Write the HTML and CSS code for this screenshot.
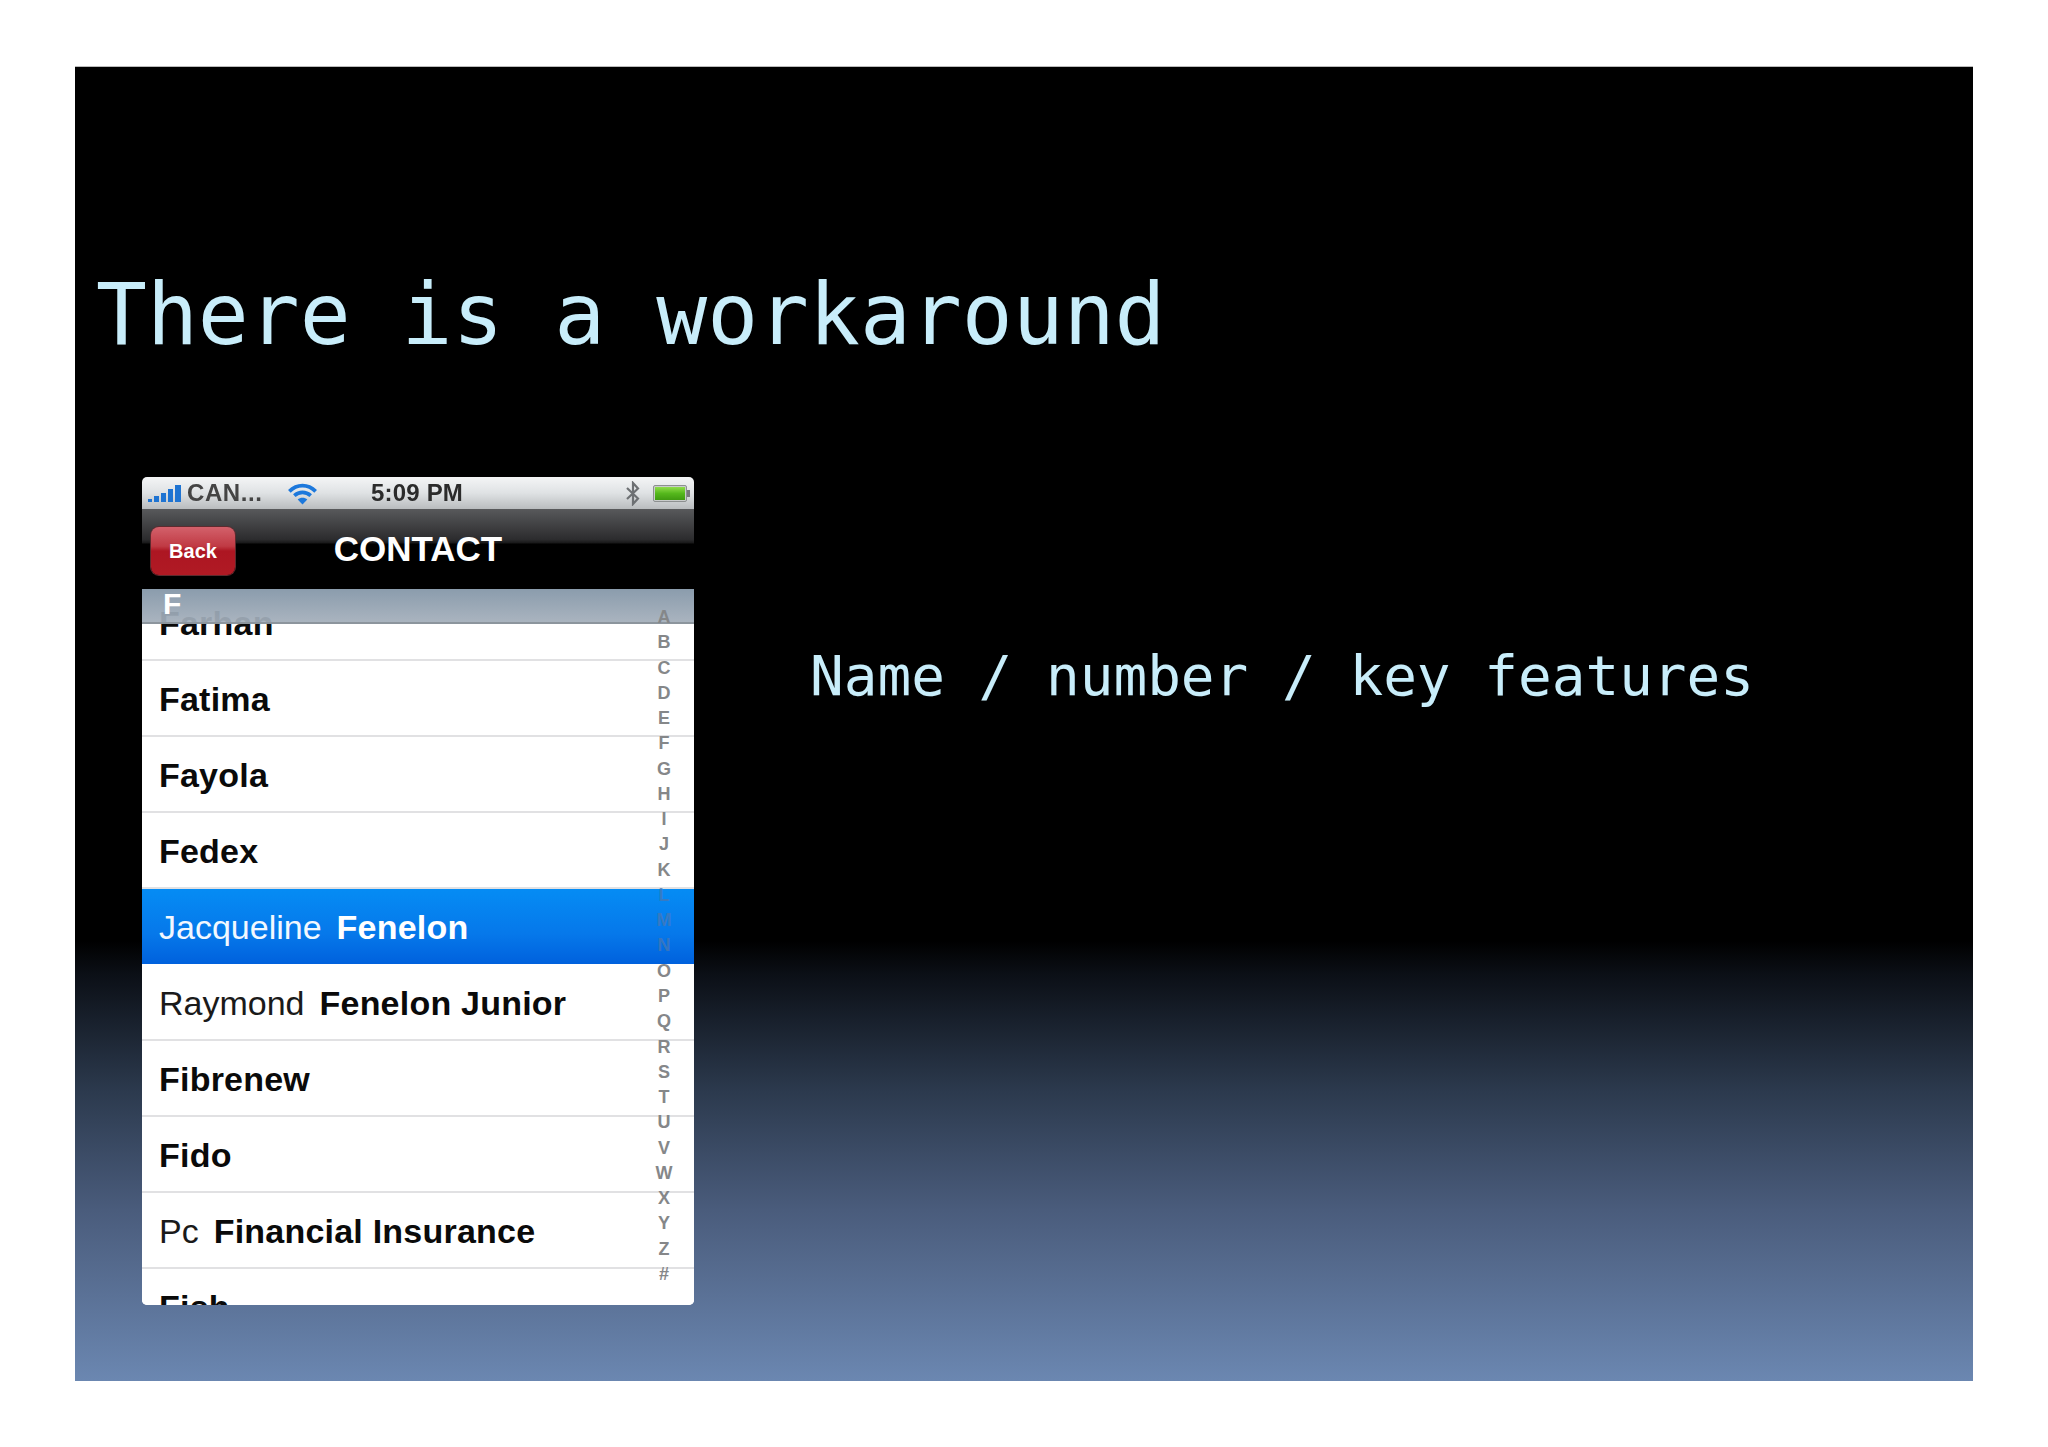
FILE: index.html
```html
<!DOCTYPE html>
<html lang="en">
<head>
<meta charset="utf-8">
<title>There is a workaround</title>
<link rel="stylesheet" href="styles.css">
</head>
<body>
<main class="slide">
  <h1 class="title">There is a workaround</h1>
  <div class="content">
    <section class="phone">
      <div class="status">
        <div class="status-left">
          <svg class="signal" viewBox="0 0 34 17"><rect x="0" y="14" width="4" height="3"/><rect x="6" y="11" width="5" height="6"/><rect x="13" y="8" width="5" height="9"/><rect x="20" y="4" width="5" height="13"/><rect x="27" y="0" width="6" height="17"/></svg>
          <span class="carrier">CAN...</span>
          <svg class="wifi" viewBox="0 0 28 21"><path d="M2 8.5C9 1.5 19 1.5 26 8.5" /><path d="M6.5 12.5C11 8.5 17 8.5 21.5 12.5"/><path d="M14 20.5L9.6 16C12 13.8 16 13.8 18.4 16Z" class="wifi-dot"/></svg>
        </div>
        <span class="clock">5:09 PM</span>
        <div class="status-right">
          <svg class="bluetooth" viewBox="0 0 16 25"><path d="M2 7L13 17.5L8 23V2L13 7.5L2 18"/></svg>
          <svg class="battery" viewBox="0 0 37 17"><defs><linearGradient id="charge" x1="0" y1="0" x2="0" y2="1"><stop offset="0" stop-color="#8fdc4a"/><stop offset="0.5" stop-color="#55b81c"/><stop offset="1" stop-color="#3f9a10"/></linearGradient></defs><rect class="battery-shell" x="0.5" y="0.5" width="33" height="16" rx="1.5"/><rect x="2" y="2" width="30" height="13" fill="url(#charge)"/><rect class="battery-tip" x="34" y="5" width="3" height="7"/></svg>
        </div>
      </div>
      <header class="nav">
        <span class="back">Back</span>
        <span class="nav-title">CONTACT</span>
      </header>
      <div class="list-wrap">
        <ul class="list">
          <li class="row"><b>Farhan</b></li>
          <li class="row"><b>Fatima</b></li>
          <li class="row"><b>Fayola</b></li>
          <li class="row"><b>Fedex</b></li>
          <li class="row selected"><span class="given">Jacqueline</span><b>Fenelon</b></li>
          <li class="row"><span class="given">Raymond</span><b>Fenelon Junior</b></li>
          <li class="row"><b>Fibrenew</b></li>
          <li class="row"><b>Fido</b></li>
          <li class="row"><span class="given">Pc</span><b>Financial Insurance</b></li>
          <li class="row"><b>Fish</b></li>
        </ul>
        <div class="section-head">F</div>
        <div class="index">
          <span>A</span><span>B</span><span>C</span><span>D</span><span>E</span><span>F</span><span>G</span><span>H</span><span>I</span><span>J</span><span>K</span><span class="dim">L</span><span class="dim">M</span><span class="dim">N</span><span>O</span><span>P</span><span>Q</span><span>R</span><span>S</span><span>T</span><span>U</span><span>V</span><span>W</span><span>X</span><span>Y</span><span>Z</span><span>#</span>
        </div>
      </div>
    </section>
    <p class="caption">Name / number / key features</p>
  </div>
</main>
</body>
</html>
```

FILE: styles.css
```css
* { box-sizing: border-box; }
html, body { margin: 0; padding: 0; }
body {
  background: #fff;
  padding: 67px 75px 0;
  width: 2048px;
  height: 1447px;
  overflow: hidden;
}
.slide {
  width: 1898px;
  height: 1314px;
  padding: 198px 0 0 21px;
  background: linear-gradient(180deg, #000 0, #000 66.5%, #0b0f16 69%, #2c3a4e 78%, #4a5c7c 87%, #6b87b1 100%);
  box-shadow: 0 -1px 0 #bbb;
}
.title {
  margin: 0;
  font: 400 84.6px/100px "DejaVu Sans Mono", monospace;
  color: #c8edfa;
  white-space: nowrap;
}
.content {
  display: flex;
  align-items: flex-start;
  margin: 112px 0 0 46px;
}
.phone {
  width: 552px;
  height: 828px;
  flex: none;
  display: flex;
  flex-direction: column;
  overflow: hidden;
  border-radius: 5px;
  font-family: "Liberation Sans", Arial, sans-serif;
  filter: blur(0.7px);
}
.status {
  height: 32px;
  flex: none;
  display: grid;
  grid-template-columns: 1fr auto 1fr;
  align-items: center;
  padding: 0 4px 0 6px;
  background: linear-gradient(180deg, #f4f5f6 0, #dfe2e4 50%, #b9bcbe 100%);
  color: #333;
  font-size: 24px;
  font-weight: 700;
}
.status-left, .status-right { display: flex; align-items: center; }
.status-right { justify-content: flex-end; gap: 12px; }
.signal { width: 34px; height: 17px; fill: #1f74d2; flex: none; }
.carrier { margin-left: 5px; font-size: 24px; color: #444; letter-spacing: 0.6px; }
.wifi { width: 31px; height: 23px; margin-left: 24px; fill: none; stroke: #1c78dc; stroke-width: 3.4; flex: none; }
.wifi .wifi-dot { fill: #1c78dc; stroke: none; }
.clock { color: #2b2b2b; letter-spacing: 0.2px; margin-right: 4px; }
.bluetooth { width: 16px; height: 25px; fill: none; stroke: #6d7073; stroke-width: 2.2; flex: none; }
.battery { width: 37px; height: 17px; flex: none; }
.battery-shell { fill: #c9cccb; stroke: #8d9090; }
.battery-tip { fill: #77797a; }
.nav {
  height: 80px;
  flex: none;
  position: relative;
  z-index: 2;
  display: flex;
  align-items: center;
  justify-content: center;
  background: linear-gradient(180deg, #58595b 0, #2c2c2e 38%, #1a1a1b 42%, #000 44%, #000 100%);
}
.nav-title {
  color: #fff;
  font-size: 35px;
  font-weight: 700;
}
.back {
  position: absolute;
  left: 9px;
  top: 18px;
  width: 84px;
  height: 48px;
  display: flex;
  align-items: center;
  justify-content: center;
  border-radius: 8px;
  color: #fff;
  font-size: 20px;
  font-weight: 700;
  background: linear-gradient(180deg, #d3616b 0, #c03a44 40%, #ad1622 50%, #b01a24 100%);
  box-shadow: 0 0 0 1px #5e2a2e;
}
.list-wrap {
  position: relative;
  flex: 1;
  overflow: hidden;
  background: #fff;
}
.list {
  list-style: none;
  margin: -4px 0 0;
  padding: 0;
}
.row {
  display: flex;
  gap: 15px;
  height: 76px;
  padding: 18px 0 0 17px;
  font-size: 34px;
  line-height: 40px;
  color: #1a1a1a;
  background: #fff;
  border-bottom: 2px solid #e1e1e3;
  white-space: nowrap;
}
.row b { color: #0a0a0a; letter-spacing: 0.22px; }
.selected {
  color: #f2f8ff;
  border-bottom: 1px solid #fff;
  background: linear-gradient(180deg, #058cf4 0, #0678ea 60%, #0061dd 100%) padding-box, #fff;
}
.selected b { color: #fff; }
.section-head {
  position: absolute;
  left: 0;
  top: 0;
  width: 100%;
  height: 35px;
  padding: 0 0 0 21px;
  font-size: 30px;
  font-weight: 700;
  line-height: 30px;
  color: #fff;
  background: linear-gradient(180deg, rgba(135, 153, 170, 0.97) 0, rgba(163, 174, 186, 0.93) 100%);
  border-bottom: 2px solid #8c959d;
}
.index {
  position: absolute;
  right: 18px;
  top: 16px;
  width: 24px;
  height: 682px;
  display: grid;
  grid-auto-rows: 1fr;
  justify-items: center;
  align-items: center;
  font-size: 18px;
  font-weight: 700;
  color: #858789;
}
.index .dim { color: rgba(70, 120, 180, 0.75); }
.caption {
  margin: 164px 0 0 116px;
  font: 400 56px/70px "DejaVu Sans Mono", monospace;
  color: #c8edfa;
  white-space: nowrap;
}
```
